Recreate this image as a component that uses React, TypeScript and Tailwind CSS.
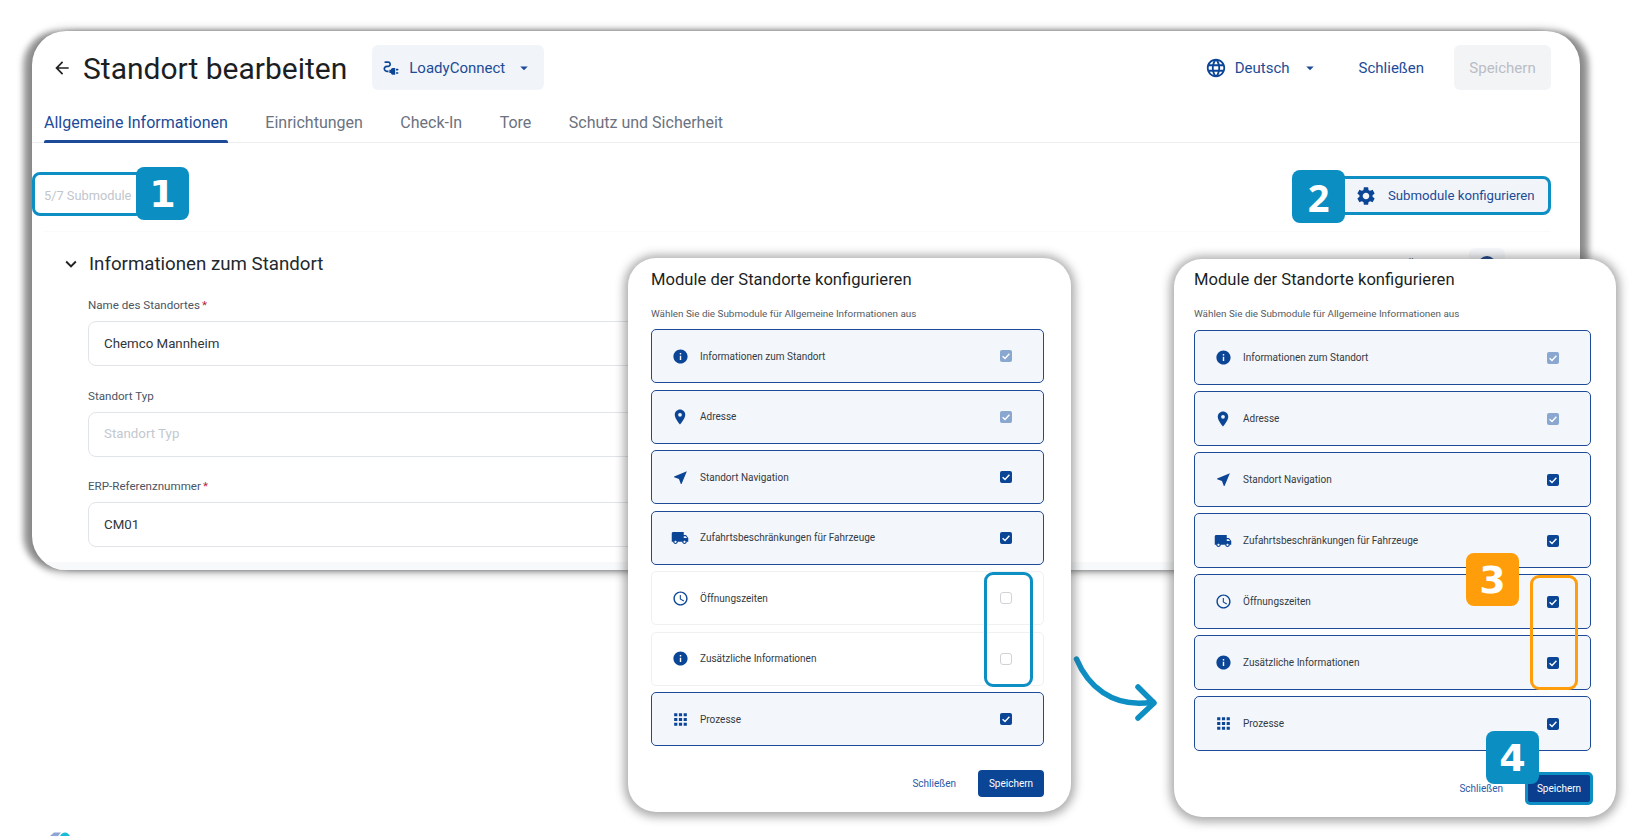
import type { ReactNode } from "react";
import {
  MdArrowBack,
  MdApps,
  MdArrowDropDown,
  MdElectricalServices,
  MdExpandMore,
  MdInfo,
  MdLanguage,
  MdLocalShipping,
  MdNearMe,
  MdOutlineSchedule,
  MdPlace,
  MdSettings,
} from "react-icons/md";

type Estado = "bloqueado" | "activo" | "vacio";

interface Fila {
  label: string;
  icon: ReactNode;
  estado: Estado;
}

const info = <MdInfo className="h-[17px] w-[17px]" />;
const iconos = {
  lugar: <MdPlace className="h-[18px] w-[18px]" />,
  nav: <MdNearMe className="h-[17px] w-[17px]" />,
  camion: <MdLocalShipping className="h-[18px] w-[18px]" />,
  reloj: <MdOutlineSchedule className="h-[17px] w-[17px]" />,
  apps: <MdApps className="h-[19px] w-[19px]" />,
};

const filasAntes: Fila[] = [
  { label: "Informationen zum Standort", icon: info, estado: "bloqueado" },
  { label: "Adresse", icon: iconos.lugar, estado: "bloqueado" },
  { label: "Standort Navigation", icon: iconos.nav, estado: "activo" },
  { label: "Zufahrtsbeschränkungen für Fahrzeuge", icon: iconos.camion, estado: "activo" },
  { label: "Öffnungszeiten", icon: iconos.reloj, estado: "vacio" },
  { label: "Zusätzliche Informationen", icon: info, estado: "vacio" },
  { label: "Prozesse", icon: iconos.apps, estado: "activo" },
];

const filasDespues: Fila[] = filasAntes.map((f) =>
  f.estado === "vacio" ? { ...f, estado: "activo" } : f
);

function Casilla({ estado }: { estado: Estado }) {
  if (estado === "vacio") {
    return <span className="block h-[12px] w-[12px] rounded-[3px] border border-[#cfd3d8] bg-white" />;
  }
  return (
    <span
      className={
        estado === "activo"
          ? "flex h-[12px] w-[12px] items-center justify-center rounded-[2px] bg-[#0b4596]"
          : "flex h-[12px] w-[12px] items-center justify-center rounded-[2px] bg-[#8aa7cf]"
      }
    >
      <svg viewBox="0 0 12 12" className="h-[12px] w-[12px]" fill="none">
        <path d="M2.6 6.3 5 8.5 9.4 3.8" stroke="#fff" strokeWidth="1.4" />
      </svg>
    </span>
  );
}

function FilaModulo({ fila, alto }: { fila: Fila; alto: string }) {
  const marcada = fila.estado !== "vacio";
  return (
    <div
      className={
        alto +
        " flex items-center rounded-[5px] pl-[18px] pr-[31px] " +
        (marcada ? "border-[1.5px] border-[#1d4b97] bg-[#f3f6fa]" : "border border-[#eef0f2] bg-white")
      }
    >
      <span className="flex w-[20px] justify-center text-[#0b4596]">{fila.icon}</span>
      <span className="ml-[10px] flex-1 text-[10px] text-[#333a42]">{fila.label}</span>
      <Casilla estado={fila.estado} />
    </div>
  );
}

function Insignia({ n, clase }: { n: string; clase: string }) {
  return (
    <div
      className={
        "absolute z-40 flex h-[53px] w-[53px] items-center justify-center rounded-[8px] text-[38px] font-bold leading-none text-white " +
        (n === "2" ? "[font-family:'Open_Sans',sans-serif] " : "[font-family:'DejaVu_Sans',sans-serif] ") +
        clase
      }
    >
      {n}
    </div>
  );
}

function Campo({ label, req, valor, vacio }: { label: string; req?: boolean; valor: string; vacio?: boolean }) {
  return (
    <div className="flex flex-col">
      <label className="h-[16px] text-[11.6px] leading-[16px] text-[#4b5563]">
        {label}
        {req && <span className="ml-[2px] text-[#b4233c]">*</span>}
      </label>
      <div
        className={
          "mt-[8px] flex h-[45px] w-[640px] items-center rounded-[8px] border border-[#e1e4e8] bg-white px-[15px] text-[13.3px] " +
          (vacio ? "text-[#c3c8ce]" : "text-[#30363c]")
        }
      >
        {valor}
      </div>
    </div>
  );
}

export default function App() {
  return (
    <div className="relative h-[836px] w-[1640px] overflow-hidden bg-white [font-family:Roboto,sans-serif]">
      {/* Ventana de fondo */}
      <div className="ml-[32px] mt-[31px] h-[539px] w-[1548px] overflow-hidden rounded-[34px] bg-white shadow-[-10px_0_6px_-1px_rgba(0,0,0,0.36),10px_0_6px_-1px_rgba(0,0,0,0.36),0_1px_8px_3px_rgba(0,0,0,0.22)]">
        <div className="flex h-[69px] items-end pb-[10px] pl-[20px] pr-[29px]">
          <div className="flex h-[45px] flex-1 items-center">
            <MdArrowBack className="h-[20px] w-[20px] text-[#222]" />
            <h1 className="ml-[11px] pt-[2px] text-[30px] font-normal leading-none text-[#1b1f24]">Standort bearbeiten</h1>
            <div className="ml-[25px] flex h-[45px] w-[172px] items-center rounded-[6px] bg-[#f1f5f9] pl-[9px] text-[#1d4b97]">
              <MdElectricalServices className="h-[20px] w-[20px] text-[#0b4596]" />
              <span className="ml-[8px] pt-[2px] text-[15px]">LoadyConnect</span>
              <MdArrowDropDown className="ml-[10px] h-[18px] w-[18px]" />
            </div>
          </div>
          <div className="flex h-[45px] items-center text-[15px] text-[#1d4b97]">
            <MdLanguage className="h-[22px] w-[22px] text-[#0b4596]" />
            <span className="ml-[8px] pt-[2px]">Deutsch</span>
            <MdArrowDropDown className="ml-[11px] h-[18px] w-[18px]" />
            <span className="ml-[40px] pt-[2px]">Schließen</span>
            <button className="ml-[30px] h-[45px] w-[97px] rounded-[6px] bg-[#f3f4f6] pt-[2px] text-[15px] text-[#b9bdc4]">
              Speichern
            </button>
          </div>
        </div>

        <div className="flex h-[43px] gap-[37.5px] border-b border-[#eceef0] pl-[12px] text-[16px] text-[#6b7280]">
          <div className="relative flex h-[43px] items-start pt-[11px] text-[#1d4b97]">
            Allgemeine Informationen
            <span className="absolute bottom-0 left-0 right-0 h-[3px] rounded-t-[2px] bg-[#1d4b97]" />
          </div>
          <div className="pt-[11px]">Einrichtungen</div>
          <div className="pt-[11px]">Check-In</div>
          <div className="pt-[11px]">Tore</div>
          <div className="pt-[11px]">Schutz und Sicherheit</div>
        </div>

        <div className="flex h-[88px] items-start justify-between pt-[33px] pl-[11px] pr-[29px]">
          <div className="-ml-[11px] -mt-[4px] flex h-[44px] w-[112px] items-center rounded-[8px] border-[3px] border-[#0e8fc4] pl-[9px] pt-[3px] text-[12.8px] text-[#c2c6cc]">
            5/7 Submodule
          </div>
          <div className="flex h-[39px] w-[215px] items-center rounded-[8px] border-[3px] border-[#0e8fc4] bg-[#f1f5f9] pl-[16px] text-[13.2px] text-[#1d4b97]">
            <MdSettings className="mr-[11px] h-[22px] w-[22px] shrink-0 text-[#0b4596]" />
            <span className="whitespace-nowrap">Submodule konfigurieren</span>
          </div>
        </div>

        <div className="relative ml-[12px] mr-[30px] h-[331px] border-t border-[#f9fafa] pl-[16px]">
          <div className="flex h-[64px] items-center">
            <MdExpandMore className="h-[22px] w-[22px] text-[#222]" />
            <span className="ml-[7px] text-[18.7px] text-[#23282e]">Informationen zum Standort</span>
          </div>
          <div className="absolute right-[45px] top-[16px] flex h-[34px] items-center gap-[10px]">
            <span className="text-[12px] text-[#555]">Öffentlich</span>
            <span className="flex h-[34px] w-[36px] items-center justify-center rounded-[6px] bg-[#f6f8fb]">
              <span className="h-[18px] w-[18px] rounded-full bg-[#0f3b85]" />
            </span>
          </div>
          <div className="ml-[28px] flex flex-col gap-[21.5px] pt-[1px]">
            <Campo label="Name des Standortes" req valor="Chemco Mannheim" />
            <Campo label="Standort Typ" valor="Standort Typ" vacio />
            <Campo label="ERP-Referenznummer" req valor="CM01" />
          </div>
        </div>
        <div className="h-[8px] bg-[#f7f9fa]" />
      </div>

      {/* Logo recortado */}
      <svg viewBox="0 0 24 4" className="absolute left-[48px] top-[832px] h-[4px] w-[24px]">
        <path d="M2 4 6 .5h7L10 4z" fill="#8ea4d6" />
        <path d="M12 4c1-2.4 3-3.6 5-3.6S21 2 22 4z" fill="#19bcd6" />
      </svg>

      {/* Dialogo antes */}
      <div className="absolute left-[628px] top-[258px] z-20 h-[554px] w-[443px] rounded-[28px] bg-white pl-[23px] pr-[27px] shadow-[0_1px_10px_4px_rgba(70,70,70,0.45)]">
        <h2 className="pt-[12px] text-[16.6px] font-normal leading-[20px] text-[#1b1f24]">Module der Standorte konfigurieren</h2>
        <p className="mt-[17px] text-[9.9px] leading-[14px] text-[#555b62]">
          Wählen Sie die Submodule für Allgemeine Informationen aus
        </p>
        <div className="mt-[8px] flex flex-col gap-[6.5px]">
          {filasAntes.map((f) => (
            <FilaModulo key={f.label} fila={f} alto="h-[54px]" />
          ))}
        </div>
        <div className="mt-[24px] flex items-center justify-end">
          <span className="text-[10px] text-[#2a5aa6]">Schließen</span>
          <button className="ml-[22px] h-[27px] w-[66px] rounded-[4px] bg-[#0b4596] text-[10px] text-white">
            Speichern
          </button>
        </div>
      </div>

      {/* Dialogo despues */}
      <div className="absolute left-[1174px] top-[259px] z-20 h-[558px] w-[442px] rounded-[28px] bg-white pl-[20px] pr-[25px] shadow-[0_1px_10px_4px_rgba(70,70,70,0.45)]">
        <h2 className="pt-[11px] text-[16.6px] font-normal leading-[20px] text-[#1b1f24]">Module der Standorte konfigurieren</h2>
        <p className="mt-[17px] text-[9.9px] leading-[14px] text-[#555b62]">
          Wählen Sie die Submodule für Allgemeine Informationen aus
        </p>
        <div className="mt-[9px] flex flex-col gap-[6px]">
          {filasDespues.map((f) => (
            <FilaModulo key={f.label} fila={f} alto="h-[55px]" />
          ))}
        </div>
        <div className="mt-[21px] -mr-[2px] flex items-center justify-end">
          <span className="text-[10px] text-[#2a5aa6]">Schließen</span>
          <button className="ml-[22px] h-[33px] w-[68px] rounded-[5px] border-[3px] border-[#0e8fc4] bg-[#0a3f8f] text-[10px] text-white">
            Speichern
          </button>
        </div>
      </div>

      {/* Marcas de los pasos */}
      <div className="absolute left-[984px] top-[572px] z-30 h-[115px] w-[49px] rounded-[9px] border-[3px] border-[#0e8fc4]" />
      <div className="absolute left-[1530px] top-[575px] z-30 h-[115px] w-[48px] rounded-[9px] border-[3px] border-[#ff9d0a]" />

      <Insignia n="1" clase="left-[136px] top-[167px] bg-[#0b8fc3]" />
      <Insignia n="2" clase="left-[1292px] top-[170px] bg-[#0b8fc3]" />
      <Insignia n="3" clase="left-[1466px] top-[553px] bg-[#ff9d0a]" />
      <Insignia n="4" clase="left-[1486px] top-[731px] bg-[#0b8fc3]" />

      {/* Flecha entre dialogos */}
      <svg viewBox="0 0 100 80" className="absolute left-[1066px] top-[648px] z-10 h-[80px] w-[100px]" fill="none">
        <path d="M10.5 11C21 36 45 61 87 54" stroke="#0e8fc4" strokeWidth="5.5" strokeLinecap="round" />
        <path
          d="M72 39 88 55 72 70"
          stroke="#0e8fc4"
          strokeWidth="5.5"
          strokeLinecap="round"
          strokeLinejoin="round"
        />
      </svg>
    </div>
  );
}
